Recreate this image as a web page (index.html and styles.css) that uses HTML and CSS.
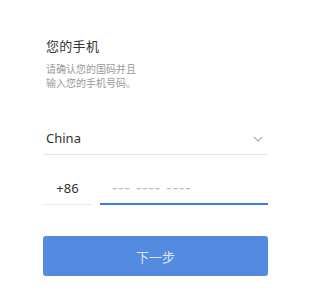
FILE: index.html
```html
<!DOCTYPE html>
<html lang="zh-CN">
<head>
<meta charset="utf-8">
<title>您的手机</title>
<link rel="stylesheet" href="styles.css">
</head>
<body>
<div class="page">
  <div class="intro">
    <div class="title">您的手机</div>
    <div class="subtitle">请确认您的国码并且<br>输入您的手机号码。</div>
  </div>
  <div class="country">
    <span class="country-name">China</span>
    <svg class="chevron" width="10" height="6" viewBox="0 0 10 6"><path d="M0.8 0.8 L5 5 L9.2 0.8" fill="none" stroke="#aaaaaa" stroke-width="1.2"/></svg>
  </div>
  <div class="phone">
    <div class="code">+86</div>
    <div class="number"><span class="placeholder">--- ---- ----</span></div>
  </div>
  <button class="next">下一步</button>
</div>
</body>
</html>
```
FILE: styles.css
```css
html, body {
  margin: 0;
  padding: 0;
  background: #ffffff;
}
body {
  font-family: "Noto Sans", "Noto Sans CJK SC", sans-serif;
  color: #333333;
}
.page {
  width: 225px;
  padding: 36px 0 0 43px;
  display: flex;
  flex-direction: column;
}
.intro {
  padding-left: 3px;
}
.title {
  font-family: "Noto Sans CJK SC", sans-serif;
  font-size: 13px;
  line-height: 20px;
  color: #333333;
  letter-spacing: 0.3px;
}
.subtitle {
  font-family: "Noto Sans CJK SC", sans-serif;
  font-size: 10px;
  line-height: 14px;
  color: #9a9a9a;
  margin-top: 6px;
}
.country {
  margin-top: 32px;
  height: 32px;
  border-bottom: 1px solid #e6e6e6;
  display: flex;
  align-items: center;
  justify-content: space-between;
  padding-left: 3px;
}
.country-name {
  font-size: 13px;
  color: #333333;
}
.chevron {
  margin-right: 5px;
  margin-top: 2px;
}
.phone {
  margin-top: 17px;
  display: flex;
  align-items: flex-end;
  gap: 8px;
}
.code {
  width: 49px;
  height: 32px;
  border-bottom: 1px solid #e9e9e9;
  display: flex;
  align-items: center;
  justify-content: center;
  font-size: 13px;
  color: #333333;
}
.number {
  flex: 1;
  height: 31px;
  border-bottom: 2px solid #3f7ee0;
  display: flex;
  align-items: center;
  padding-left: 12px;
}
.placeholder {
  font-size: 17px;
  color: #bdbdbd;
  letter-spacing: 0.8px;
  margin-top: -2px;
}
.next {
  margin-top: 31px;
  height: 40px;
  border: none;
  border-radius: 3px;
  background: #548ae0;
  color: #dce6f8;
  font-family: "Noto Sans CJK SC", sans-serif;
  font-size: 13px;
  padding: 0;
}
```
